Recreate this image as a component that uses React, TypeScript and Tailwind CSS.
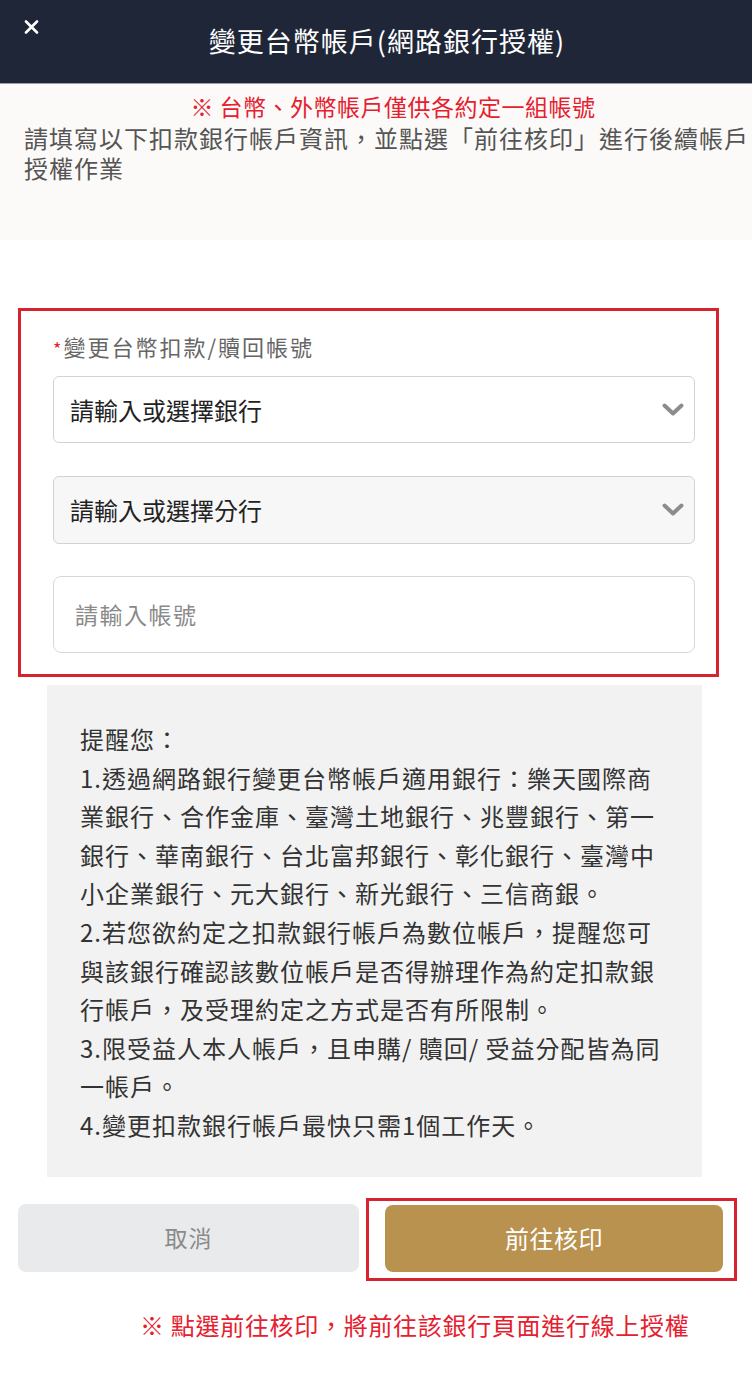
import React from "react";

const font = { fontFamily: '"Noto Sans CJK TC", "Noto Sans", sans-serif' };

function Chevron() {
  return (
    <svg width="22" height="14" viewBox="0 0 22 14" className="shrink-0">
      <polyline points="2.5,2.5 11,10.5 19.5,2.5" fill="none" stroke="#8c8c8c" strokeWidth="4" strokeLinecap="round" strokeLinejoin="round" />
    </svg>
  );
}

export default function App() {
  return (
    <div className="w-[752px] min-h-[1395px] bg-white" style={font}>
      {/* Header */}
      <div className="relative h-[84px] bg-[#1f2637] border-b border-[#9aa0aa] flex items-center justify-center">
        <svg className="absolute left-[24px] top-[20px]" width="15" height="14" viewBox="0 0 15 14">
          <path d="M2 1.5 L13 12.5 M13 1.5 L2 12.5" stroke="#ffffff" strokeWidth="2.6" strokeLinecap="round" />
        </svg>
        <div className="text-white text-[27px] tracking-[1px] leading-none pl-[22px] pb-[2px]">變更台幣帳戶(網路銀行授權)</div>
      </div>

      {/* Intro */}
      <div className="h-[156px] bg-[#fcfaf8] pt-[8px] pl-[24px]">
        <div className="text-center text-[#e5202f] text-[23px] tracking-[0.5px] leading-[28px] pl-[10px]">※ 台幣、外幣帳戶僅供各約定一組帳號</div>
        <div className="mt-[3px] text-[#555] text-[24px] tracking-[1px] leading-[30px]">請填寫以下扣款銀行帳戶資訊，並點選「前往核印」進行後續帳戶授權作業</div>
      </div>

      {/* Form box */}
      <div className="mt-[68px] ml-[18px] w-[701px] border-[3px] border-[#d7232f] pt-[20px] pb-[21px] pl-[32px] pr-[21px]">
        <div className="text-[#666] text-[22px] tracking-[2px] leading-[30px] mb-[13px]">
          <span className="text-[#e5202f] text-[18px]">*</span>變更台幣扣款/贖回帳號
        </div>
        <div className="h-[67px] rounded-[6px] border border-[#d2d2d2] bg-white flex items-center justify-between pl-[16px] pr-[10px]">
          <span className="text-[#222] text-[24px] leading-none">請輸入或選擇銀行</span>
          <Chevron />
        </div>
        <div className="mt-[33px] h-[68px] rounded-[6px] border border-[#d2d2d2] bg-[#f7f7f7] flex items-center justify-between pl-[16px] pr-[10px]">
          <span className="text-[#222] text-[24px] leading-none">請輸入或選擇分行</span>
          <Chevron />
        </div>
        <div className="mt-[32px] h-[77px] rounded-[8px] border border-[#d8d8d8] bg-white flex items-center pl-[21px]">
          <span className="text-[#8a8a8a] text-[23px] tracking-[1.5px] leading-none">請輸入帳號</span>
        </div>
      </div>

      {/* Notice */}
      <div className="mt-[8px] ml-[47px] w-[655px] bg-[#f2f2f2] pt-[35px] pb-[32px] pl-[33px] pr-[28px]">
        <div className="text-[#333] text-[24px] tracking-[1px] leading-[38.6px]">
          <div>提醒您：</div>
          <div>1.透過網路銀行變更台幣帳戶適用銀行：樂天國際商業銀行、合作金庫、臺灣土地銀行、兆豐銀行、第一銀行、華南銀行、台北富邦銀行、彰化銀行、臺灣中小企業銀行、元大銀行、新光銀行、三信商銀。</div>
          <div>2.若您欲約定之扣款銀行帳戶為數位帳戶，提醒您可與該銀行確認該數位帳戶是否得辦理作為約定扣款銀行帳戶，及受理約定之方式是否有所限制。</div>
          <div>3.限受益人本人帳戶，且申購/ 贖回/ 受益分配皆為同一帳戶。</div>
          <div>4.變更扣款銀行帳戶最快只需1個工作天。</div>
        </div>
      </div>

      {/* Buttons */}
      <div className="mt-[21px] pl-[18px] flex items-start">
        <div className="mt-[6px] w-[341px] h-[68px] rounded-[8px] bg-[#e9eaec] flex items-center justify-center text-[#8a8a8a] text-[23px] tracking-[1px]">取消</div>
        <div className="ml-[7px] w-[371px] border-[3px] border-[#d7232f] pt-[4px] pb-[6px] pl-[16px] pr-[11px]">
          <div className="h-[67px] rounded-[8px] bg-[#b8924e] flex items-center justify-center text-white text-[24px] tracking-[0.5px]">前往核印</div>
        </div>
      </div>

      <div className="mt-[30px] pl-[140px] text-[#e5202f] text-[24px] tracking-[0.7px] leading-[28px]">※ 點選前往核印，將前往該銀行頁面進行線上授權</div>
    </div>
  );
}
